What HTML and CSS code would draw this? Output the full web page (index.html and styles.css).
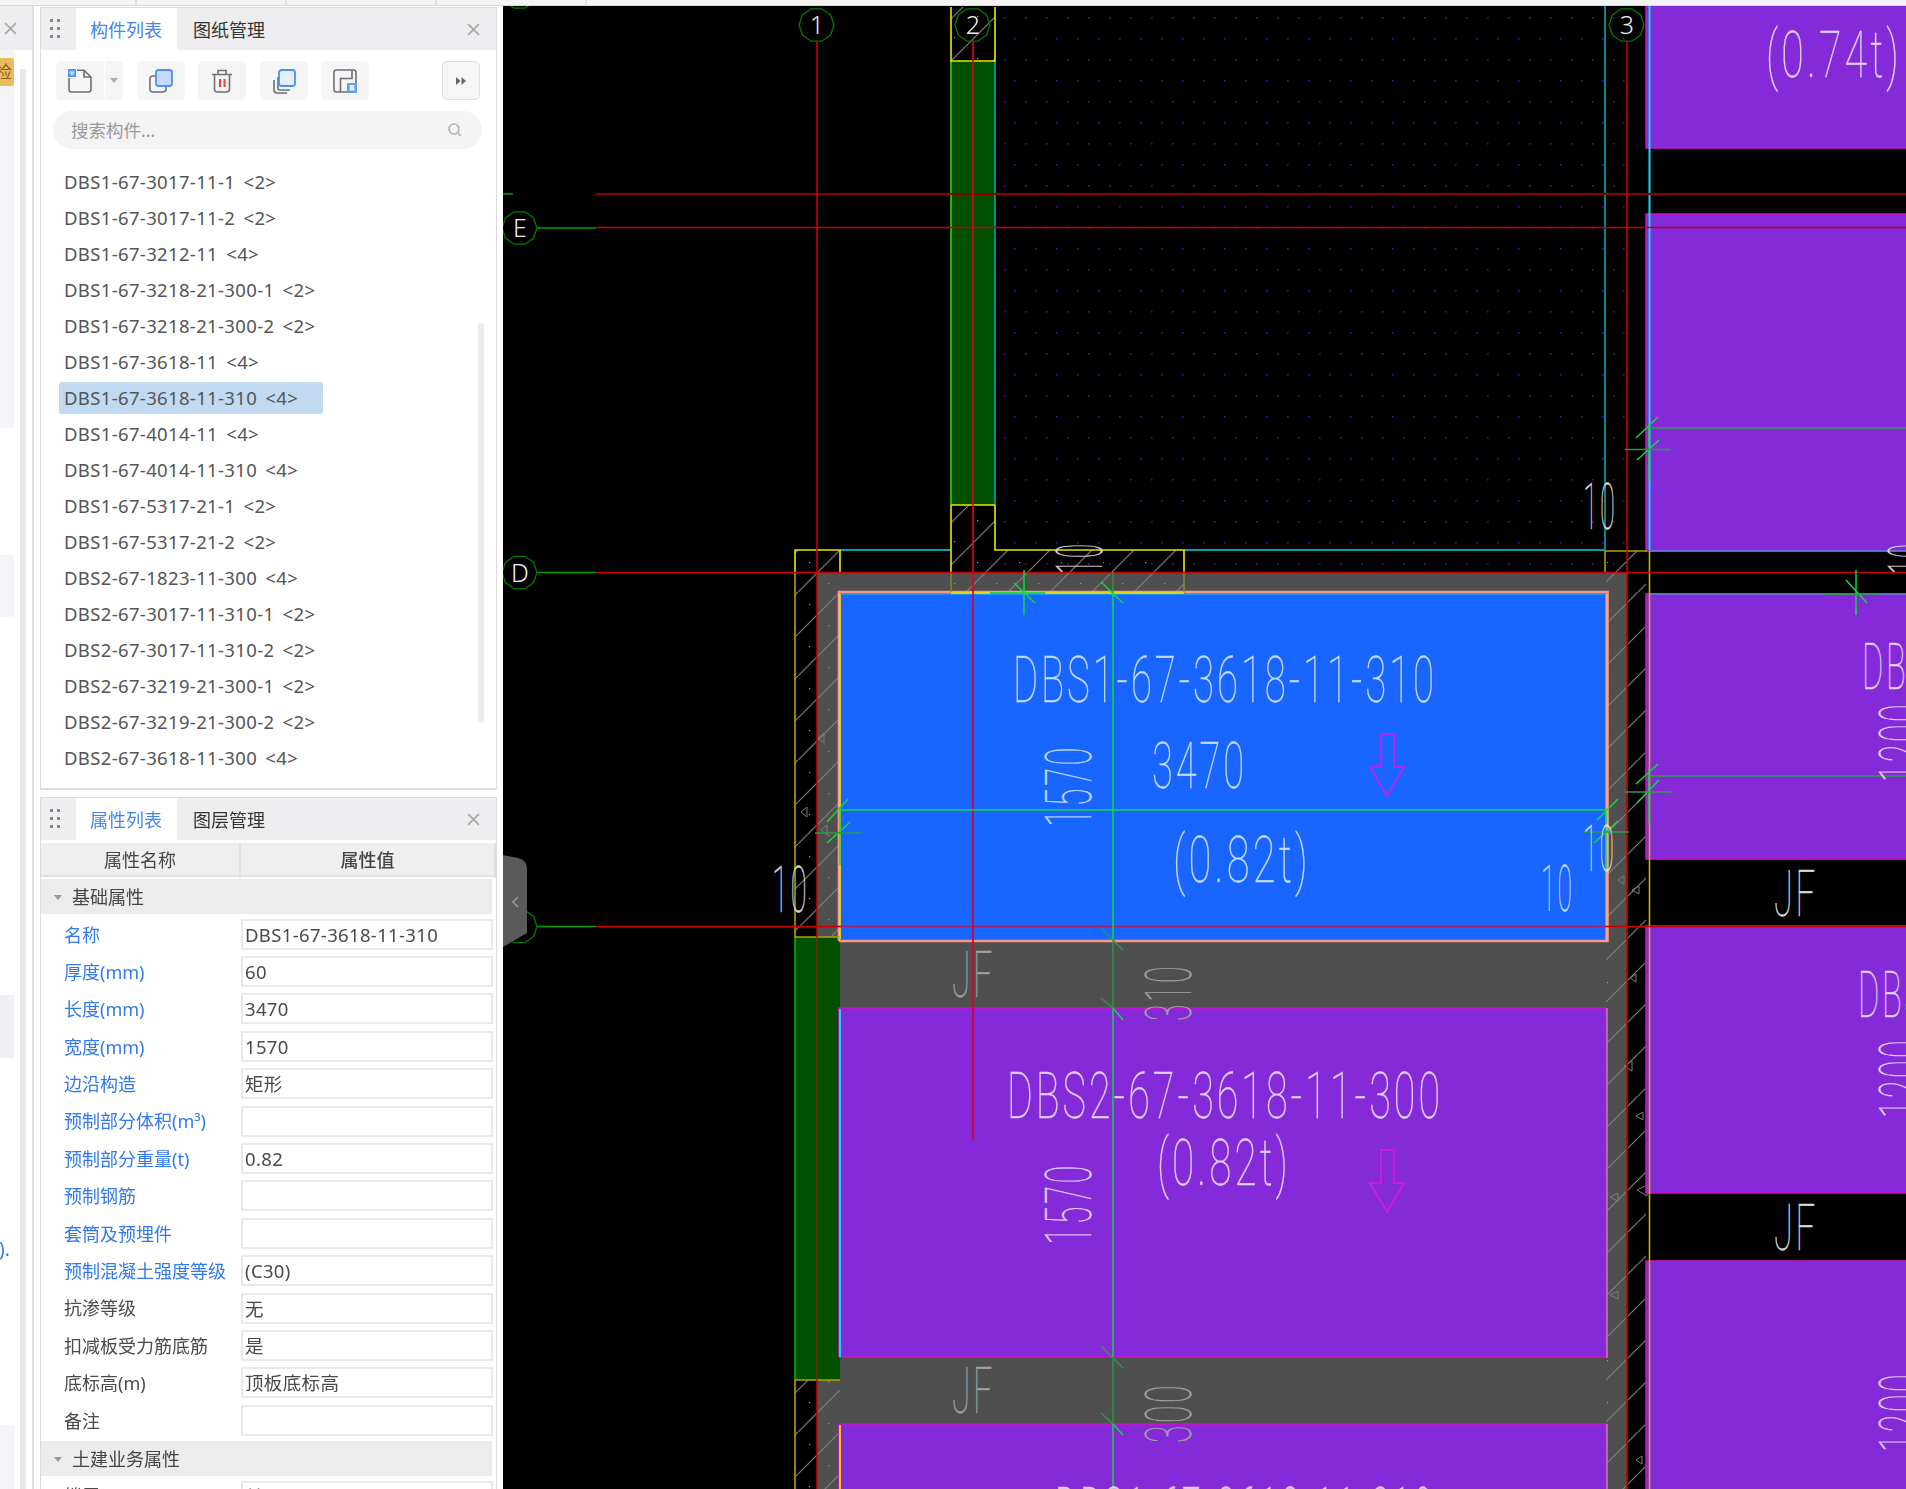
FILE: index.html
```html
<!DOCTYPE html>
<html lang="zh-CN">
<head>
<meta charset="utf-8">
<title>构件列表</title>
<link rel="stylesheet" href="styles.css">
</head>
<body>
<div class="app">
  <div class="tabstrip"><i class="tile first"></i><i class="tile"></i><i class="tile"></i><i class="tile"></i></div>
  <div class="main">
    <aside class="sliver">
      <div class="sliver-head"><svg class="x-icon" viewBox="0 0 12 12"><path d="M1 1L11 11M11 1L1 11"/></svg></div>
      <div class="sliver-body">
        <div class="sliver-col">
          <div class="block b1"><div class="badge"><span>检</span></div></div>
          <div class="block b2"></div>
          <div class="block b3"></div>
          <div class="frag">).</div>
          <div class="block b4"></div>
        </div>
        <div class="track"></div>
      </div>
    </aside>
    <div class="panels">
      <section class="panel panel-list">
        <header class="panel-head">
          <svg class="drag" viewBox="0 0 10 20"><g><rect x="0" y="0" width="3" height="3"/><rect x="7" y="0" width="3" height="3"/><rect x="0" y="8" width="3" height="3"/><rect x="7" y="8" width="3" height="3"/><rect x="0" y="16" width="3" height="3"/><rect x="7" y="16" width="3" height="3"/></g></svg>
          <div class="tab active">构件列表</div>
          <div class="tab">图纸管理</div>
          <svg class="x-icon close" viewBox="0 0 12 12"><path d="M1 1L11 11M11 1L1 11"/></svg>
        </header>
        <div class="toolbar">
          <div class="tbtn split">
            <span class="split-main">
              <svg class="ico" viewBox="0 0 24 24"><path class="s-grey" d="M9 1.2H16L23 8V20.5Q23 23 20.5 23H3.5Q1 23 1 20.5V9"/><path class="s-grey" d="M16 1.2V8H23"/><rect class="f-star" x="0" y="0" width="8" height="8"/><path class="s-white" d="M4 1V7M1 4H7M2 2L6 6M6 2L2 6"/></svg>
            </span>
            <span class="split-caret"><svg class="caret" viewBox="0 0 8 5"><path d="M0 0H8L4 5Z"/></svg></span>
          </div>
          <div class="tbtn"><svg class="ico" viewBox="0 0 24 24"><rect class="s-grey" x="1" y="7" width="16" height="16" rx="3"/><rect class="s-blue f-lblue" x="7" y="1" width="16" height="16" rx="2.5"/></svg></div>
          <div class="tbtn"><svg class="ico" viewBox="0 0 24 24"><path class="s-grey" d="M2 5.5H22M8 5.5V1.5H16V5.5M4.5 5.5V20Q4.5 23 7.5 23H16.5Q19.5 23 19.5 20V5.5"/><path class="s-red" d="M10 10V18M14.5 10V18"/></svg></div>
          <div class="tbtn"><svg class="ico" viewBox="0 0 24 24"><path class="s-grey" d="M6 8V19Q6 21 8 21H18M2 11V21Q2 24 5 24H15"/><rect class="s-blue f-xblue" x="7" y="1" width="16" height="16" rx="2.5"/></svg></div>
          <div class="tbtn"><svg class="ico" viewBox="0 0 24 24"><path class="s-grey" d="M14 23H3.5Q1 23 1 20.5V3.5Q1 1 3.5 1H20.5Q23 1 23 3.5V14"/><path class="s-grey" d="M7.5 23V9.5H19V1.5"/><rect class="f-blue" x="14" y="14" width="10" height="10" rx="1"/><path class="f-white" d="M16 16H22L21 18.5L22 21.5H16L17 18.5Z"/></svg></div>
          <div class="tbtn more"><svg class="more-ico" viewBox="0 0 10 8"><path d="M0 0L4.5 4L0 8ZM5.5 0L10 4L5.5 8Z"/></svg></div>
        </div>
        <div class="search"><span class="search-text">搜索构件...</span><svg class="search-ico" viewBox="0 0 14 14"><circle cx="6" cy="6" r="5"/><path d="M10 10L13 13"/></svg></div>
        <ul class="list">
          <li class="row">DBS1-67-3017-11-1 &lt;2&gt;</li>
          <li class="row">DBS1-67-3017-11-2 &lt;2&gt;</li>
          <li class="row">DBS1-67-3212-11 &lt;4&gt;</li>
          <li class="row">DBS1-67-3218-21-300-1 &lt;2&gt;</li>
          <li class="row">DBS1-67-3218-21-300-2 &lt;2&gt;</li>
          <li class="row">DBS1-67-3618-11 &lt;4&gt;</li>
          <li class="row selected">DBS1-67-3618-11-310 &lt;4&gt;</li>
          <li class="row">DBS1-67-4014-11 &lt;4&gt;</li>
          <li class="row">DBS1-67-4014-11-310 &lt;4&gt;</li>
          <li class="row">DBS1-67-5317-21-1 &lt;2&gt;</li>
          <li class="row">DBS1-67-5317-21-2 &lt;2&gt;</li>
          <li class="row">DBS2-67-1823-11-300 &lt;4&gt;</li>
          <li class="row">DBS2-67-3017-11-310-1 &lt;2&gt;</li>
          <li class="row">DBS2-67-3017-11-310-2 &lt;2&gt;</li>
          <li class="row">DBS2-67-3219-21-300-1 &lt;2&gt;</li>
          <li class="row">DBS2-67-3219-21-300-2 &lt;2&gt;</li>
          <li class="row">DBS2-67-3618-11-300 &lt;4&gt;</li>
          <li class="row">DBS2-67-4015-11-310 &lt;4&gt;</li>
        </ul>
        <div class="list-thumb"></div>
      </section>
      <section class="panel panel-props">
        <header class="panel-head">
          <svg class="drag" viewBox="0 0 10 20"><g><rect x="0" y="0" width="3" height="3"/><rect x="7" y="0" width="3" height="3"/><rect x="0" y="8" width="3" height="3"/><rect x="7" y="8" width="3" height="3"/><rect x="0" y="16" width="3" height="3"/><rect x="7" y="16" width="3" height="3"/></g></svg>
          <div class="tab active">属性列表</div>
          <div class="tab">图层管理</div>
          <svg class="x-icon close" viewBox="0 0 12 12"><path d="M1 1L11 11M11 1L1 11"/></svg>
        </header>
        <div class="thead"><div class="th">属性名称</div><div class="th strong">属性值</div></div>
        <div class="section"><svg class="tri" viewBox="0 0 8 5"><path d="M0 0H8L4 5Z"/></svg>基础属性</div>
        <div class="prop"><div class="label blue">名称</div><div class="value">DBS1-67-3618-11-310</div></div>
        <div class="prop"><div class="label blue">厚度(mm)</div><div class="value">60</div></div>
        <div class="prop"><div class="label blue">长度(mm)</div><div class="value">3470</div></div>
        <div class="prop"><div class="label blue">宽度(mm)</div><div class="value">1570</div></div>
        <div class="prop"><div class="label blue">边沿构造</div><div class="value">矩形</div></div>
        <div class="prop"><div class="label blue">预制部分体积(m³)</div><div class="value"></div></div>
        <div class="prop"><div class="label blue">预制部分重量(t)</div><div class="value">0.82</div></div>
        <div class="prop"><div class="label blue">预制钢筋</div><div class="value"></div></div>
        <div class="prop"><div class="label blue">套筒及预埋件</div><div class="value"></div></div>
        <div class="prop"><div class="label blue">预制混凝土强度等级</div><div class="value">(C30)</div></div>
        <div class="prop"><div class="label">抗渗等级</div><div class="value">无</div></div>
        <div class="prop"><div class="label">扣减板受力筋底筋</div><div class="value">是</div></div>
        <div class="prop"><div class="label">底标高(m)</div><div class="value">顶板底标高</div></div>
        <div class="prop"><div class="label">备注</div><div class="value"></div></div>
        <div class="section"><svg class="tri" viewBox="0 0 8 5"><path d="M0 0H8L4 5Z"/></svg>土建业务属性</div>
        <div class="prop"><div class="label">楼层</div><div class="value">首层</div></div>
      </section>
    </div>
    <div class="canvas">
      <svg class="cad" viewBox="503 6 1403 1483" width="1403" height="1483">
        <defs>
          <pattern id="dots" patternUnits="userSpaceOnUse" x="1025" y="17" width="21" height="42">
            <rect class="dot" x="0" y="0" width="1.6" height="1.6"/>
            <rect class="dot" x="10" y="21" width="1.6" height="1.6"/>
          </pattern>
          <pattern id="hatch" patternUnits="userSpaceOnUse" x="0" y="4" width="42" height="42">
            <path class="hatch-line" d="M-2 44L44 -2"/>
            <rect class="speck" x="11" y="12" width="1.2" height="1.2"/>
            <rect class="speck" x="30" y="33" width="1.2" height="1.2"/>
          </pattern>
        </defs>

        <rect class="f-black" x="503" y="6" width="1403" height="1483"/>
        <rect fill="url(#dots)" x="997" y="6" width="628" height="566"/>

        <rect class="f-slab" x="817" y="572" width="810" height="917"/>
        <rect class="f-wall" x="951" y="61" width="44" height="444"/>
        <rect class="f-wall" x="795" y="937" width="45" height="443"/>

        <rect class="f-slabblue" x="840" y="593" width="766" height="347"/>
        <rect class="f-purple" x="839" y="1008" width="767" height="349"/>
        <rect class="f-purple" x="839" y="1424" width="767" height="70"/>
        <rect class="f-purple" x="1646" y="0" width="270" height="148"/>
        <rect class="f-purple" x="1646" y="214" width="270" height="337"/>
        <rect class="f-purple" x="1646" y="594" width="270" height="265"/>
        <rect class="f-purple" x="1646" y="926" width="270" height="267"/>
        <rect class="f-purple" x="1646" y="1261" width="270" height="240"/>

        <path fill="url(#hatch)" d="M951 7H995V61H951Z"/>
        <path fill="url(#hatch)" d="M951 505H995V550H1184V593H951Z"/>
        <path fill="url(#hatch)" d="M795 550H840V593H840V937H795Z"/>
        <path fill="url(#hatch)" d="M795 1380H840V1489H795Z"/>
        <path fill="url(#hatch)" d="M1606 551H1646V1489H1606Z"/>

        <g class="tris">
          <path d="M818 738L824 733L824 743Z"/><path d="M801 812L807 807L807 817Z"/><path d="M821 830L827 825L827 835Z"/>
          <path d="M1632 890L1639 886L1639 894Z"/><path d="M1618 880L1624 876L1624 884Z"/><path d="M1624 1066L1632 1061L1632 1071Z"/>
          <path d="M1636 1116L1643 1112L1643 1120Z"/><path d="M1637 1190L1647 1185L1647 1196Z"/><path d="M1610 1197L1618 1193L1618 1201Z"/>
          <path d="M1610 1295L1618 1291L1618 1299Z"/><path d="M1630 978L1636 974L1636 982Z"/><path d="M1636 1460L1642 1456L1642 1464Z"/>
          <path d="M799 1500L807 1495L807 1505Z"/>
        </g>

        <path class="l-magenta" d="M839 1357V1008H1606M839 1357H1606V1008M839 1494V1424H1606V1494"/>
        <path class="l-magenta" d="M1906 148H1646V6M1906 214H1646V551H1906M1906 594H1646V859H1906M1906 926H1646V1193H1906M1906 1261H1646V1489"/>
        <path class="l-peach" d="M839 941V592H1607.5V941H839"/>
        <path class="l-cyan-thin" d="M841 594H1605"/>
        <path class="l-yellow" d="M840 594V939"/>
        <path class="l-orange" d="M1606.5 594V940"/>
        <path class="l-peach2" d="M1607 1008V1358M1607 1424V1489"/>
        <path class="l-cyan" d="M840 1009V1357"/>
        <path class="l-amber" d="M840 1425V1489"/>

        <path class="l-cyan2" d="M840 550H951M1184 550H1605"/>
        <path class="l-teal" d="M1605 6V550"/>
        <path class="l-cyan" d="M1649.5 6V550"/>
        <path class="l-cyan-thin" d="M1649.5 551H1906M1649.5 594H1906"/>

        <path class="l-lime" d="M951 61V505"/>
        <path class="l-teal" d="M995 61V505"/>
        <path class="l-green" d="M795 937V1380"/>

        <path class="l-yellow" d="M951 7V61H995V7M951 505H995M951 572V505M995 505V550H1184V572"/>
        <path class="l-dimyellow" d="M951 572V593M1184 572V593"/>
        <path class="l-yellow" d="M951 593H990M1045 593H1184"/>
        <path class="l-yellow" d="M840 572V550H795V572"/>
        <path class="l-olive" d="M795 572V937H840M1605 572V551H1647M1605 551V572"/>
        <path class="l-olive" d="M795 1380H840M795 1380V1489"/>
        <path class="l-amber2" d="M1649.5 551V1489"/>

        <path class="l-reddark" d="M596 194H1906"/>
        <path class="l-red" d="M596 227.5H1906M596 572.5H1906M817 42V937M817 1380V1489M1627 42V1489"/>
        <path class="l-redwall" d="M817 937V1380"/>
        <path class="l-red" d="M596 926.5H840M1606 926.5H1906"/>
        <path class="l-redblue" d="M840 926.5H1606"/>
        <path class="l-crimson" d="M973 42V1140"/>

        <path class="l-gstub" d="M503 194H513M537 228H596M537 572.5H596M537 926.5H596"/>
        <g class="bubble">
          <polygon points="834,25 830.6,35 821.9,41.2 811.1,41.2 802.4,35 799,25 802.4,15 811.1,8.8 821.9,8.8 830.6,15"/>
          <polygon points="990,25 986.6,35 977.9,41.2 967.1,41.2 958.4,35 955,25 958.4,15 967.1,8.8 977.9,8.8 986.6,15"/>
          <polygon points="1644,25 1640.6,35 1631.9,41.2 1621.1,41.2 1612.4,35 1609,25 1612.4,15 1621.1,8.8 1631.9,8.8 1640.6,15"/>
          <polygon points="537,228 533.6,238 524.9,244.2 514.1,244.2 505.4,238 502,228 505.4,218 514.1,211.8 524.9,211.8 533.6,218"/>
          <polygon points="537,572.5 533.6,582.5 524.9,588.7 514.1,588.7 505.4,582.5 502,572.5 505.4,562.5 514.1,556.3 524.9,556.3 533.6,562.5"/>
          <polygon points="537,926.5 533.6,936.5 524.9,942.7 514.1,942.7 505.4,936.5 502,926.5 505.4,916.5 514.1,910.3 524.9,910.3 533.6,916.5"/>
          <polygon points="537,-8 533.6,2 524.9,8.2 514.1,8.2 505.4,2 502,-8 505.4,-18 514.1,-24.2 524.9,-24.2 533.6,-18"/>
        </g>
        <text class="axis" x="817" y="34">1</text>
        <text class="axis" x="973" y="34">2</text>
        <text class="axis" x="1627" y="34">3</text>
        <text class="axis" x="520" y="237">E</text>
        <text class="axis" x="520" y="581.5">D</text>

        <path class="l-dim" d="M1113 572V593M1113 940V1008M1113 1357V1424"/>
        <path class="l-bright" d="M1113 593V940M1113 1008V1357M1113 1424V1489"/>
        <path class="l-bright" d="M840 810H1606"/>
        <path class="l-dim" d="M1649 428H1906M1649 776H1906"/>
        <path class="l-bright" d="M990 593H1045M1024 570V615M1014 583L1035 603M1101 582L1123 603"/>
        <path class="l-dim" d="M1101 928L1123 950M1101 998L1113 1008M1101 1346L1123 1368M1101 1413L1113 1424"/>
        <path class="l-bright" d="M1113 1008L1123 1020M1113 1424L1123 1435"/>
        <path class="l-bright" d="M848 799L827 822M850 822L827 843M840 807V865"/>
        <path class="l-dim" d="M815 833H861"/>
        <path class="l-bright" d="M1597 820L1618 799M1594 843L1618 821M1606 811V869"/>
        <path class="l-dim" d="M1583 832H1629"/>
        <path class="l-bright" d="M1636 438L1658 417M1637 460L1659 440M1649 424V482"/>
        <path class="l-dim" d="M1625 449.5H1671"/>
        <path class="l-bright" d="M1636 784L1658 764M1637 803L1659 780M1649 770V823"/>
        <path class="l-dim" d="M1625 792H1671"/>
        <path class="l-bright" d="M1856 570V615M1846 580L1867 603"/>
        <path class="l-dim" d="M1823 594H1879"/>

        <path class="arrow" d="M1381 734H1394V767H1404L1387 796L1370 767H1381Z"/>
        <path class="arrow" d="M1381 1150H1394V1183H1404L1387 1212L1370 1183H1381Z"/>

        <g class="txt blue-t">
          <text x="1013" y="702" textLength="424" lengthAdjust="spacingAndGlyphs">DBS1-67-3618-11-310</text>
          <text x="1152" y="788" textLength="95" lengthAdjust="spacingAndGlyphs">3470</text>
          <text x="1173" y="882" textLength="138" lengthAdjust="spacingAndGlyphs">(0.82t)</text>
          <text transform="translate(1091 827) rotate(-90)" textLength="82" lengthAdjust="spacingAndGlyphs">1570</text>
          <text x="1541" y="911" textLength="33" lengthAdjust="spacingAndGlyphs">10</text>
        </g>
        <g class="txt pale">
          <text x="1007" y="1118" textLength="436" lengthAdjust="spacingAndGlyphs">DBS2-67-3618-11-300</text>
          <text x="1157" y="1185" textLength="134" lengthAdjust="spacingAndGlyphs">(0.82t)</text>
          <text transform="translate(1091 1245) rotate(-90)" textLength="82" lengthAdjust="spacingAndGlyphs">1570</text>
          <text x="1055" y="1533" textLength="380" lengthAdjust="spacingAndGlyphs">DBS1-67-3618-11-310</text>
          <text x="1766" y="77" textLength="136" lengthAdjust="spacingAndGlyphs">(0.74t)</text>
          <text x="1862" y="689" textLength="68" lengthAdjust="spacingAndGlyphs">DBS</text>
          <text x="1858" y="1017" textLength="68" lengthAdjust="spacingAndGlyphs">DBS</text>
          <text transform="translate(1925 782) rotate(-90)" textLength="80" lengthAdjust="spacingAndGlyphs">1200</text>
          <text transform="translate(1925 1118) rotate(-90)" textLength="80" lengthAdjust="spacingAndGlyphs">1200</text>
          <text transform="translate(1925 1452) rotate(-90)" textLength="80" lengthAdjust="spacingAndGlyphs">1200</text>
        </g>
        <g class="txt grey-t">
          <text x="772" y="912" textLength="37" lengthAdjust="spacingAndGlyphs">10</text>
          <text x="1583" y="871" textLength="33" lengthAdjust="spacingAndGlyphs">10</text>
          <text x="1583" y="529" textLength="34" lengthAdjust="spacingAndGlyphs">10</text>
          <text transform="translate(1102 574) rotate(-90)" textLength="32" lengthAdjust="spacingAndGlyphs">10</text>
          <text transform="translate(1934 574) rotate(-90)" textLength="32" lengthAdjust="spacingAndGlyphs">10</text>
          <text x="1774" y="916" textLength="44" lengthAdjust="spacingAndGlyphs">JF</text>
          <text x="1774" y="1250" textLength="44" lengthAdjust="spacingAndGlyphs">JF</text>
        </g>
        <g class="txt slab-t">
          <text x="952" y="997" textLength="43" lengthAdjust="spacingAndGlyphs">JF</text>
          <text x="952" y="1413" textLength="43" lengthAdjust="spacingAndGlyphs">JF</text>
          <text transform="translate(1191 1021) rotate(-90)" textLength="57" lengthAdjust="spacingAndGlyphs">310</text>
          <text transform="translate(1191 1443) rotate(-90)" textLength="60" lengthAdjust="spacingAndGlyphs">300</text>
        </g>
      </svg>
      <div class="handle"><svg viewBox="0 0 24 92"><path class="handle-bg" d="M0 0L15 3Q24 5 24 14V78L0 92Z"/><path class="handle-chev" d="M15 42L10 47L15 52"/></svg></div>
    </div>
  </div>
</div>
</body>
</html>
```
FILE: styles.css
```css
* { box-sizing: border-box; }
html, body { margin: 0; padding: 0; background: #fff; }
.app {
  width: 1906px; height: 1489px; overflow: hidden;
  display: flex; flex-direction: column;
  font: 18px/1.3 "Noto Sans", "Noto Sans CJK SC", sans-serif;
  color: #4a4a4a;
}
.tabstrip { height: 6px; flex: none; display: flex; background: #f4f4f4; border-bottom: 1px solid #d8d8d8; }
.tile { display: block; width: 150px; border-right: 2px solid #e2e2e2; }
.tile.first { width: 137px; }
.main { flex: 1; min-height: 0; display: flex; }

/* left sliver */
.sliver { width: 34px; flex: none; border-right: 2px solid #dedede; filter: blur(.4px); display: flex; flex-direction: column; }
.sliver-head { height: 44px; flex: none; background: #eeeef0; display: flex; align-items: center; justify-content: flex-end; padding-right: 15px; }
.x-icon { width: 13px; height: 13px; fill: none; stroke: #a8a8a8; stroke-width: 1.6; }
.sliver-body { flex: 1; display: flex; }
.sliver-col { width: 14px; flex: none; display: flex; flex-direction: column; }
.block { background: #f4f5f8; }
.b1 { height: 378px; padding-top: 8px; }
.b2 { height: 62px; margin-top: 127px; }
.b3 { height: 63px; margin-top: 378px; background: #eef0f3; }
.frag { height: 24px; margin-top: 179px; color: #2f7cf0; font-size: 19px; line-height: 24px; white-space: nowrap; overflow: hidden; text-indent: -1px; }
.b4 { flex: 1; margin-top: 164px; }
.badge { width: 14px; height: 28px; background: #ebbc62; border-radius: 0 3px 3px 0; overflow: hidden; color: #8a5a10; font-size: 17px; line-height: 28px; }
.badge span { display: block; margin-left: -5px; }
.track { width: 6px; margin: 19px 0 0 6px; background: #e9e9e9; }

/* panels */
.panels { width: 457px; flex: none; margin: 0 6px 0 6px; display: flex; flex-direction: column; gap: 7px; filter: blur(.4px); }
.panel { border: 1px solid #dcdcdc; border-bottom-width: 2px; position: relative; overflow: hidden; background: #fff; }
.panel-list { height: 783px; flex: none; margin-top: 1px; }
.panel-props { flex: 1; min-height: 0; border-bottom: 0; }
.panel-head { height: 42px; background: #eeeef0; display: flex; align-items: stretch; padding-left: 9px; }
.drag { width: 10px; height: 20px; align-self: center; margin-right: 16px; fill: #858585; }
.tab { width: 101px; padding-left: 14px; line-height: 45px; flex: none; color: #333; font-size: 18px; white-space: nowrap; }
.tab + .tab { margin-left: 2px; padding-left: 14px; }
.tab.active { background: #fff; color: #3f86f4; }
.close { margin: auto 16px auto auto; }

.toolbar { display: flex; gap: 13.5px; padding: 11px 16px 0 15px; }
.tbtn { width: 48px; height: 39px; background: #f5f5f5; border-radius: 5px; display: flex; align-items: center; justify-content: center; }
.tbtn.split { width: 67px; background: none; gap: 1px; }
.split-main { width: 48px; height: 39px; background: #f5f5f5; border-radius: 5px 0 0 5px; display: flex; align-items: center; justify-content: center; }
.split-caret { width: 18px; height: 39px; background: #f5f5f5; border-radius: 0 5px 5px 0; display: flex; align-items: center; justify-content: center; }
.caret { width: 8px; height: 5px; fill: #aaa; }
.ico { width: 24px; height: 24px; overflow: visible; fill: none; }
.s-grey { fill: none; stroke: #6b7078; stroke-width: 1.6; }
.s-blue { stroke: #4a90f8; stroke-width: 1.8; }
.f-lblue { fill: #c8dbf6; }
.f-xblue { fill: #e4eefc; }
.f-star { fill: #4d93f2; }
.s-white { stroke: #d5e6ff; stroke-width: .9; fill: none; }
.s-red { stroke: #ec3f3f; stroke-width: 2; fill: none; }
.f-blue { fill: #5b9cf5; }
.f-white { fill: #e6f0ff; }
.tbtn.more { width: 38px; margin-left: auto; border: 1.5px solid #e0e0e0; background: #f6f6f6; }
.more-ico { width: 10px; height: 8px; fill: #666; }

.search { height: 38px; margin: 11px 14px 0 12px; background: #f4f4f4; border-radius: 19px; display: flex; align-items: center; justify-content: space-between; padding: 1px 14px 0 18px; color: #999; font-size: 17.5px; }
.search-ico { width: 14px; height: 14px; margin-top: -2px; margin-right: 6px; fill: none; stroke: #b0b0b0; stroke-width: 1.6; }

.list { list-style: none; margin: 15px 0 0; padding: 2px 0 0 18px; height: 670px; display: flex; flex-direction: column; gap: 4px; overflow: hidden; }
.row { width: 264px; height: 32px; flex: none; padding-left: 5px; line-height: 31px; white-space: pre; font-size: 18.5px; letter-spacing: .35px; word-spacing: 3px; color: #555; border-radius: 3px; }
.row.selected { background: #c1d9f1; }
.list-thumb { position: absolute; left: 437px; top: 315px; width: 6px; height: 400px; background: #ececec; border-radius: 3px; }

.thead { display: grid; grid-template-columns: 198px 1fr; height: 34px; margin-top: 3px; background: #efefef; border-bottom: 2px solid #e0e0e0; }
.th { text-align: center; line-height: 35px; color: #444; font-size: 18px; }
.th + .th { border-left: 2px solid #e0e0e0; border-right: 2px solid #e0e0e0; }
.strong { font-weight: 500; }
.section { height: 35px; margin: 2px 4px 1.5px 0; background: #ececec; display: flex; align-items: center; padding: 2px 0 0 13px; color: #444; font-size: 18px; }
.tri { width: 8px; height: 5px; margin-right: 10px; fill: #999; }
.prop { display: grid; grid-template-columns: 200px 252px; height: 37.4px; align-items: center; }
.label { padding: 2px 0 0 23px; white-space: nowrap; font-size: 18px; color: #4a4a4a; }
.label.blue { color: #3278f0; }
.value { height: 31px; border: 2px solid #e9e9e9; padding-left: 2px; line-height: 27px; font-size: 18.5px; letter-spacing: .35px; white-space: nowrap; color: #4a4a4a; }

/* canvas */
.canvas { flex: 1; min-width: 0; position: relative; background: #000; overflow: hidden; }
.cad { display: block; }
.handle { position: absolute; left: 0; top: 849px; width: 24px; height: 92px; }
.handle svg { display: block; width: 24px; height: 92px; }
.handle-bg { fill: #5a5a5a; }
.handle-chev { fill: none; stroke: #999; stroke-width: 1.5; }

.f-black { fill: #000; }
.f-slab { fill: #4f4f4f; }
.f-wall { fill: #005000; }
.f-slabblue { fill: #1866ff; }
.f-purple { fill: #842ad8; }
.dot { fill: #7000a0; }
.hatch-line { stroke: #7e7e7e; stroke-width: 1.2; fill: none; }
.speck { fill: #9a9a9a; }
.tris path { fill: none; stroke: #7c7c7c; stroke-width: 1; }

.cad path[class^="l-"] { fill: none; }
.l-magenta { stroke: #d010d0; stroke-width: 1.5; }
.l-peach { stroke: #ff9480; stroke-width: 2.6; }
.l-peach2 { stroke: #c878b0; stroke-width: 1.5; }
.l-orange { stroke: #ffa878; stroke-width: 2; }
.l-cyan { stroke: #10d8f8; stroke-width: 2; }
.l-cyan-thin { stroke: #10c8f0; stroke-width: 1; }
.l-cyan2 { stroke: #00d8d8; stroke-width: 1.3; }
.l-teal { stroke: #0aa5ad; stroke-width: 1.6; }
.l-yellow { stroke: #e8e800; stroke-width: 1.6; }
.l-dimyellow { stroke: #8a8a40; stroke-width: 1.4; }
.l-olive { stroke: #b0a400; stroke-width: 1.6; }
.l-amber { stroke: #ffc400; stroke-width: 2; }
.l-amber2 { stroke: #c8b400; stroke-width: 1.6; }
.l-lime { stroke: #30d800; stroke-width: 1.6; }
.l-green { stroke: #00b000; stroke-width: 1.6; }
.l-reddark { stroke: #8c0000; stroke-width: 2.2; }
.l-red { stroke: #c80000; stroke-width: 1.6; }
.l-redwall { stroke: #8e2400; stroke-width: 1.4; }
.l-redblue { stroke: #a8206c; stroke-width: 2; }
.l-crimson { stroke: #dc0020; stroke-width: 1.7; }
.l-gstub { stroke: #00a000; stroke-width: 1.6; }
.l-bright { stroke: #10d840; stroke-width: 1.5; }
.l-dim { stroke: #2c9a48; stroke-width: 1.3; }
.arrow { fill: none; stroke: #d818e8; stroke-width: 1.6; }
.bubble polygon { fill: none; stroke: #007a00; stroke-width: 1.3; }
.axis { font: 300 25px "Noto Sans", sans-serif; fill: #eee; text-anchor: middle; }

.txt text { font: 100 65px Roboto, "Noto Sans", sans-serif; letter-spacing: 5px; stroke-width: .35px; }
.blue-t text { fill: #c4dcff; stroke: #c4dcff; }
.pale text { fill: #e0cffa; stroke: #e0cffa; }
.grey-t text { fill: #d8d8d8; stroke: #d8d8d8; }
.slab-t text { fill: #a0a0a0; stroke: #a0a0a0; }
```
